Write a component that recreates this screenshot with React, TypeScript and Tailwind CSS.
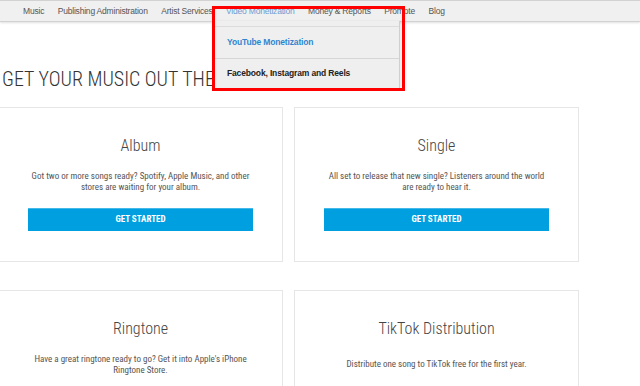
import React from 'react';

const navFont = "font-['Liberation_Sans',Arial,sans-serif]";
const bodyFont = "font-['Roboto_Condensed','Roboto',sans-serif]";

const navItems = [
  'Music',
  'Publishing Administration',
  'Artist Services',
  'Video Monetization',
  'Money & Reports',
  'Promote',
  'Blog',
];

const products = [
  {
    title: 'Album',
    text: 'Got two or more songs ready? Spotify, Apple Music, and other stores are waiting for your album.',
    button: true,
  },
  {
    title: 'Single',
    text: 'All set to release that new single? Listeners around the world are ready to hear it.',
    button: true,
  },
  {
    title: 'Ringtone',
    text: "Have a great ringtone ready to go? Get it into Apple's iPhone Ringtone Store.",
    button: false,
  },
  {
    title: 'TikTok Distribution',
    text: 'Distribute one song to TikTok free for the first year.',
    button: false,
  },
];

function ProductCard({ title, text, button }: { title: string; text: string; button: boolean }) {
  return (
    <div className="w-[285px] shrink-0 border border-[#e6e6e6] bg-white pt-[28px] pb-[30px]">
      <h3 className={`${bodyFont} text-center text-[16px] leading-[20px] font-light text-[#444]`}>
        {title}
      </h3>
      <div className="mt-[14px] h-[23px] flex items-center justify-center px-[28px]">
        <p className={`${bodyFont} text-center text-[9px] leading-[11px] text-[#555]`}>{text}</p>
      </div>
      {button ? (
        <button
          className={`${bodyFont} mt-[15px] mx-auto block w-[225px] h-[23px] bg-[#009fe0] border-t border-[#45b8ea] text-white text-[9px] font-bold`}
        >
          GET STARTED
        </button>
      ) : (
        <div className="mt-[15px] h-[23px]" />
      )}
    </div>
  );
}

export default function App() {
  return (
    <div className="relative w-[640px] h-[386px] overflow-hidden bg-white">
      {/* top nav */}
      <div className="border-t border-[#333] bg-[#f0f0f0] h-[22px] border-b border-[#d2d2d2] shadow-[0_1px_2px_rgba(0,0,0,0.12)]">
        <ul className={`${navFont} flex items-center h-full pl-[23px] gap-[13.5px] text-[8.5px] tracking-[-0.2px] text-[#555]`}>
          {navItems.map((item) => (
            <li key={item} className={item === 'Video Monetization' ? 'text-[#6b9dd3]' : ''}>
              {item}
            </li>
          ))}
        </ul>
      </div>

      {/* dropdown */}
      <div className="absolute left-[215px] top-[21px] w-[185px] h-[67px] bg-[#efefef] border-r border-[#cfcfcf] shadow-[2px_0_2px_rgba(0,0,0,0.08)]">
        <div className="mt-[5px] border-t border-[#dcdcdc]" />
        <div className={`${navFont} h-[31px] flex items-center pl-[12px] text-[8.5px] tracking-[-0.15px] font-bold text-[#2f86d0]`}>
          YouTube Monetization
        </div>
        <div className="border-t border-[#d6d6d6]" />
        <div className={`${navFont} h-[29px] flex items-center pl-[12px] text-[8.5px] tracking-[-0.15px] font-bold text-[#222]`}>
          Facebook, Instagram and Reels
        </div>
      </div>
      <div className="absolute left-[212px] top-[6px] w-[193px] h-[85px] border-[3px] border-[#f00]" />

      {/* main */}
      <div className="mt-[45px]">
        <h1 className={`${bodyFont} pl-[2px] text-[20px] leading-[24px] font-light text-[#333]`}>
          GET YOUR MUSIC OUT THERE
        </h1>
        <div className="mt-[16px] ml-[-2px] grid grid-cols-[285px_285px] gap-x-[11px] gap-y-[28px]">
          {products.map((p) => (
            <ProductCard key={p.title} title={p.title} text={p.text} button={p.button} />
          ))}
        </div>
      </div>
    </div>
  );
}
